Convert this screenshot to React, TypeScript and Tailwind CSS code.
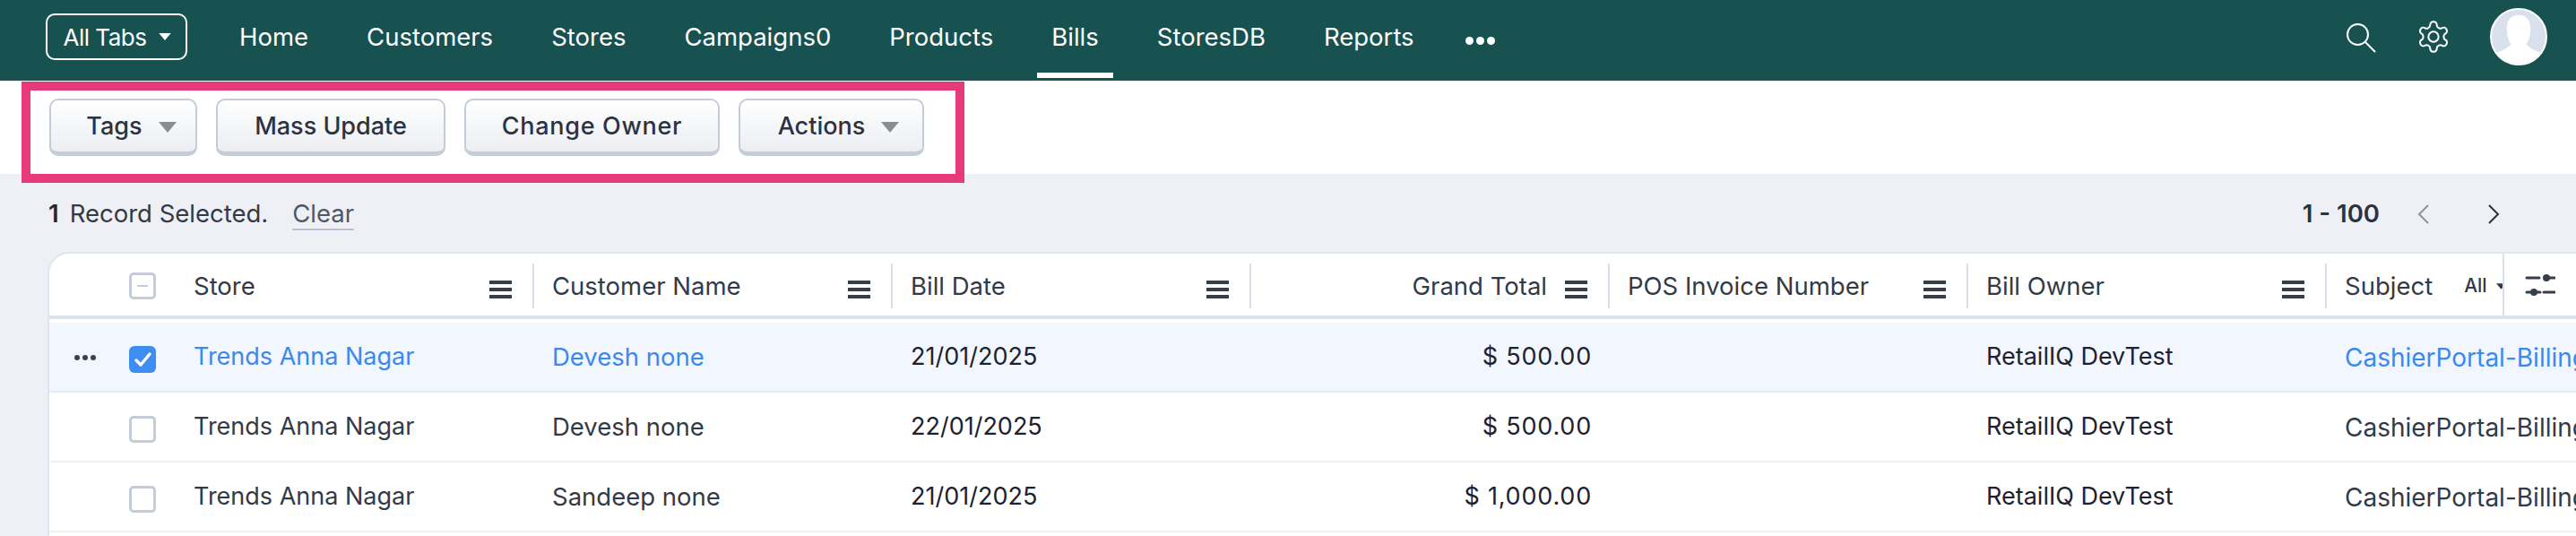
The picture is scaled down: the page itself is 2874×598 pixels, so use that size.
const navItems = ["Home", "Customers", "Stores", "Campaigns0", "Products", "Bills", "StoresDB", "Reports"];

const rows = [
  { store: "Trends Anna Nagar", customer: "Devesh none", date: "21/01/2025", total: "$ 500.00", selected: true },
  { store: "Trends Anna Nagar", customer: "Devesh none", date: "22/01/2025", total: "$ 500.00", selected: false },
  { store: "Trends Anna Nagar", customer: "Sandeep none", date: "21/01/2025", total: "$ 1,000.00", selected: false },
];

function Caret({ className }: { className: string }) {
  return (
    <svg viewBox="0 0 20 12" className={className} fill="currentColor">
      <path d="M0 0h20L10 12z" />
    </svg>
  );
}

function MenuBars() {
  return (
    <div className="mt-[8px] flex h-[20px] w-[25px] shrink-0 flex-col justify-between">
      <div className="h-[4px] bg-[#363d4b]" />
      <div className="h-[4px] bg-[#363d4b]" />
      <div className="h-[4px] bg-[#363d4b]" />
    </div>
  );
}

function ToolButton({ label, className, caret }: { label: string; className: string; caret?: boolean }) {
  return (
    <button
      className={`${className} flex h-[64px] items-center justify-center gap-[18px] rounded-[10px] border-2 border-b-[5px] border-[#c3ccd8] bg-gradient-to-b from-white to-[#eceef3] pt-[2px] text-[27px] font-medium text-[#2d3240]`}
    >
      {label}
      {caret && <Caret className="h-[12px] w-[20px] text-[#8a8d92]" />}
    </button>
  );
}

function HeaderCell({ label, right }: { label: string; right?: boolean }) {
  return (
    <div className="flex h-full w-[400px] shrink-0 items-center pt-[3px]">
      <div className={`flex h-[50px] w-full items-center border-r-2 border-[#d9e1ea] pl-[20px] pr-[23px] ${right ? "justify-end gap-[20px]" : "justify-between"}`}>
        <span className="pt-[2px] text-[27.5px] text-[#333a47]">{label}</span>
        <MenuBars />
      </div>
    </div>
  );
}

function Cell({ children, right }: { children?: string; right?: boolean }) {
  return (
    <div className={`w-[400px] shrink-0 pt-[1px] text-[27px] text-[#1d2230] ${right ? "pr-[20px] text-right tracking-[0.8px]" : "pl-[20px]"}`}>
      {children}
    </div>
  );
}

export default function App() {
  return (
    <div className="relative h-[598px] w-[2874px] overflow-hidden bg-[#eef0f5] font-['Inter',sans-serif]">
      {/* top nav */}
      <nav className="flex h-[90px] bg-[#175251] pl-[51px] text-white">
        <button className="mt-[15px] flex h-[52px] w-[158px] items-center justify-center gap-[14px] rounded-[10px] border-2 border-white pl-[2px] text-[26px] tracking-[-0.5px]">
          All Tabs
          <Caret className="h-[8px] w-[14px]" />
        </button>
        <div className="ml-[42px] flex gap-[33px]">
          {navItems.map((item) => (
            <div
              key={item}
              className={`flex h-[87px] items-center border-b-[6px] px-[16px] pt-[3px] text-[27.5px] ${item === "Bills" ? "border-white" : "border-transparent"}`}
            >
              {item}
            </div>
          ))}
          <div className="flex h-[87px] items-center gap-[3px] pl-[8px] pt-[3px]">
            <div className="h-[9px] w-[9px] rounded-full bg-white" />
            <div className="h-[9px] w-[9px] rounded-full bg-white" />
            <div className="h-[9px] w-[9px] rounded-full bg-white" />
          </div>
        </div>
        <div className="ml-auto flex items-center pb-[9px] pr-[32px]">
          <svg viewBox="0 0 33 33" className="mt-[4px] h-[33px] w-[33px]" fill="none" stroke="currentColor" strokeWidth={2}>
            <circle cx="12.5" cy="12.5" r="11.5" />
            <path d="M21 21l11 11" />
          </svg>
          <svg viewBox="0 0 24 24" className="ml-[44px] h-[40px] w-[40px]" fill="none" stroke="currentColor" strokeWidth={1.2}>
            <path d="M12.22 2h-.44a2 2 0 0 0-2 2v.18a2 2 0 0 1-1 1.73l-.43.25a2 2 0 0 1-2 0l-.15-.08a2 2 0 0 0-2.73.73l-.22.38a2 2 0 0 0 .73 2.73l.15.1a2 2 0 0 1 1 1.72v.51a2 2 0 0 1-1 1.74l-.15.09a2 2 0 0 0-.73 2.73l.22.38a2 2 0 0 0 2.73.73l.15-.08a2 2 0 0 1 2 0l.43.25a2 2 0 0 1 1 1.73V20a2 2 0 0 0 2 2h.44a2 2 0 0 0 2-2v-.18a2 2 0 0 1 1-1.73l.43-.25a2 2 0 0 1 2 0l.15.08a2 2 0 0 0 2.73-.73l.22-.39a2 2 0 0 0-.73-2.73l-.15-.08a2 2 0 0 1-1-1.74v-.5a2 2 0 0 1 1-1.74l.15-.09a2 2 0 0 0 .73-2.73l-.22-.38a2 2 0 0 0-2.73-.73l-.15.08a2 2 0 0 1-2 0l-.43-.25a2 2 0 0 1-1-1.73V4a2 2 0 0 0-2-2z" />
            <circle cx="12" cy="12" r="3.4" />
          </svg>
          <div className="ml-[43px] h-[64px] w-[64px] overflow-hidden rounded-full border-2 border-white bg-[#d9e2ec]">
            <svg viewBox="0 0 64 64" className="h-full w-full" fill="#fff">
              <path d="M32 6c-10 0-14 7-14 16 0 7 1 13 5 19-6 6-12 8-19 10 6 9 16 13 28 13s22-4 28-13c-7-2-13-4-19-10 4-6 5-12 5-19 0-9-4-16-14-16z" />
            </svg>
          </div>
        </div>
      </nav>

      {/* mass action toolbar */}
      <div className="flex h-[104px] items-center gap-[21px] bg-white pl-[55px]">
        <ToolButton label="Tags" className="w-[165px] pl-[18px]" caret />
        <ToolButton label="Mass Update" className="w-[256px]" />
        <ToolButton label="Change Owner" className="w-[285px] tracking-[0.7px]" />
        <ToolButton label="Actions" className="w-[207px] pl-[16px]" caret />
      </div>

      {/* selection info + pagination */}
      <div className="flex h-[87px] items-center pl-[54px] pr-[84px] pt-[2px] text-[27.5px] text-[#333a47]">
        <span className="font-semibold text-[#232834]">1</span>
        <span className="ml-[12px]">Record Selected.</span>
        <span className="ml-[27px] border-b-2 border-[#b9c2ce] leading-[34px] text-[#4f5866]">Clear</span>
        <span className="ml-auto font-semibold text-[#2d3240]">1 - 100</span>
        <svg viewBox="0 0 15 22" className="ml-[41px] h-[22px] w-[15px] text-[#8d949c]" fill="none" stroke="currentColor" strokeWidth={2}>
          <path d="M13 1L3 11l10 10" />
        </svg>
        <svg viewBox="0 0 15 22" className="ml-[64px] h-[22px] w-[15px] text-[#2d3240]" fill="none" stroke="currentColor" strokeWidth={2}>
          <path d="M2 1l10 10L2 21" />
        </svg>
      </div>

      {/* table */}
      <div className="ml-[53px] h-[317px] rounded-tl-[24px] border-l-2 border-t-2 border-[#dde5ee] bg-white">
        <div className="flex h-[69px]">
          <div className="w-[89px] shrink-0" />
          <div className="flex w-[30px] shrink-0 items-center pt-[3px]">
            <div className="flex h-[30px] w-[30px] items-center justify-center rounded-[5px] border-[3px] border-[#c3ccd8]">
              <div className="h-[2px] w-[12px] bg-[#c3ccd8]" />
            </div>
          </div>
          <div className="flex w-[422px] shrink-0 items-center pt-[3px]">
            <div className="flex h-[50px] w-full items-center justify-between border-r-2 border-[#d9e1ea] pl-[42px] pr-[23px]">
              <span className="pt-[2px] text-[27.5px] text-[#333a47]">Store</span>
              <MenuBars />
            </div>
          </div>
          <HeaderCell label="Customer Name" />
          <HeaderCell label="Bill Date" />
          <HeaderCell label="Grand Total" right />
          <HeaderCell label="POS Invoice Number" />
          <HeaderCell label="Bill Owner" />
          <div className="flex w-[196px] shrink-0 items-center overflow-hidden whitespace-nowrap pl-[20px] pt-[3px] text-[#333a47]">
            <span className="pt-[2px] text-[27.5px]">Subject</span>
            <span className="ml-[35px] text-[21px] font-medium">All</span>
            <Caret className="ml-[10px] h-[7px] w-[11px] shrink-0" />
          </div>
          <div className="flex grow items-center border-l-2 border-[#d9e1ea] pl-[23px] pt-[3px] text-[#363d4b]">
            <svg viewBox="0 0 34 28" className="h-[28px] w-[34px]" fill="none" stroke="currentColor" strokeWidth={3} strokeLinecap="round">
              <path d="M2 5h14M24 5h9M2 21h15M21 21h12" />
              <circle cx="24" cy="5" r="4" fill="currentColor" stroke="none" />
              <circle cx="10" cy="21" r="4" fill="currentColor" stroke="none" />
            </svg>
          </div>
        </div>
        <div className="h-[4px] bg-[#dbe4ed]" />
        <div className="h-[4px]" />
        {rows.map((row) => (
          <div
            key={row.date + row.total}
            className={`flex h-[78px] items-center overflow-hidden whitespace-nowrap border-b-2 ${row.selected ? "border-[#e6ebf3] bg-[#f2f6fe]" : "border-[#eef0f5]"}`}
          >
            <div className="mt-[2px] flex w-[89px] shrink-0 gap-[3px] pl-[28px]">
              {row.selected && (
                <>
                  <div className="h-[6px] w-[6px] rounded-full bg-[#3a4150]" />
                  <div className="h-[6px] w-[6px] rounded-full bg-[#3a4150]" />
                  <div className="h-[6px] w-[6px] rounded-full bg-[#3a4150]" />
                </>
              )}
            </div>
            {row.selected ? (
              <div className="mt-[6px] flex h-[30px] w-[30px] shrink-0 items-center justify-center rounded-[6px] bg-[#3d8df2] text-white">
                <svg viewBox="0 0 30 30" className="h-[30px] w-[30px]" fill="none" stroke="currentColor" strokeWidth={3.5} strokeLinecap="round" strokeLinejoin="round">
                  <path d="M8 16l5 5L23 9" />
                </svg>
              </div>
            ) : (
              <div className="mt-[6px] h-[30px] w-[30px] shrink-0 rounded-[5px] border-[3px] border-[#c3ccd8]" />
            )}
            <div className={`w-[422px] shrink-0 pl-[42px] pt-[1px] text-[27px] ${row.selected ? "text-[#3b88ee]" : "text-[#333a47]"}`}>{row.store}</div>
            <div className={`w-[400px] shrink-0 pl-[20px] pt-[1px] text-[27.5px] ${row.selected ? "text-[#3b88ee]" : "text-[#333a47]"}`}>{row.customer}</div>
            <Cell>{row.date}</Cell>
            <Cell right>{row.total}</Cell>
            <Cell />
            <Cell>RetailIQ DevTest</Cell>
            <div className={`pl-[20px] pt-[1px] text-[28px] ${row.selected ? "text-[#3b88ee]" : "text-[#333a47]"}`}>CashierPortal-Billing</div>
          </div>
        ))}
      </div>

      {/* annotation frame */}
      <div className="absolute left-[24px] top-[91px] h-[113px] w-[1052px] border-[10px] border-[#e63a7b]" />
    </div>
  );
}
